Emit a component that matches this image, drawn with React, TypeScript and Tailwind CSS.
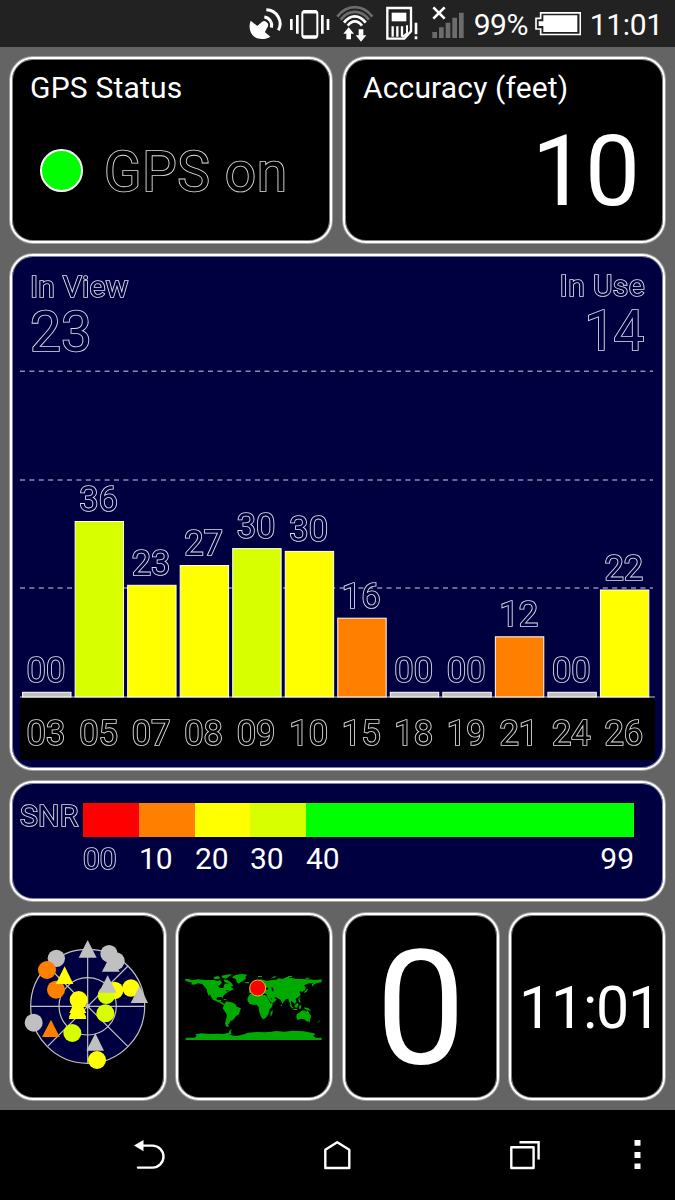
import React from 'react'

type Bar = {
  id: string
  snr: string
  top: number
  color: string
}

const GRAY = '#c0c0c0'
const ORANGE = '#ff8000'
const YELLOW = '#ffff00'
const LIME = '#d8ff00'

const bars: Bar[] = [
  { id: '03', snr: '00', top: 692.3, color: GRAY },
  { id: '05', snr: '36', top: 521.5, color: LIME },
  { id: '07', snr: '23', top: 585.3, color: YELLOW },
  { id: '08', snr: '27', top: 565.5, color: YELLOW },
  { id: '09', snr: '30', top: 548.6, color: LIME },
  { id: '10', snr: '30', top: 551.4, color: YELLOW },
  { id: '15', snr: '16', top: 618.2, color: ORANGE },
  { id: '18', snr: '00', top: 692.3, color: GRAY },
  { id: '19', snr: '00', top: 692.3, color: GRAY },
  { id: '21', snr: '12', top: 636.8, color: ORANGE },
  { id: '24', snr: '00', top: 692.3, color: GRAY },
  { id: '26', snr: '22', top: 590, color: YELLOW },
]

// the fill hides the inner half of the stroke, so only a hairline stays outside the glyph
const outlineBlack = 'will-change-transform text-black [-webkit-text-stroke:1.7px_#e0e0e0] [paint-order:stroke_fill]'
const outlineNavy = 'will-change-transform text-[#000040] [-webkit-text-stroke:1.7px_#e0e0e8] [paint-order:stroke_fill]'

const Panel = (props: { className?: string; children: React.ReactNode }) => {
  return (
    <div
      className={`overflow-hidden rounded-[23px] border-2 border-white shadow-[0_0_0_1px_rgba(255,255,255,0.4),inset_0_0_0_1px_rgba(255,255,255,0.5)] ${props.className ?? ''}`}
    >
      {props.children}
    </div>
  )
}

const StatusBar = () => {
  return (
    <header className="flex h-[47px] items-start bg-[#222222] pl-[246.67px]">
      {/* gps dish */}
      <svg className="h-[47px] w-[40px] shrink-0" viewBox="20 0 120 141">
        <path d="M31 62C24 80 28 101 43 111C58 120 77 118 90 110L76 98L64 90L50 77Z" fill="#fff" />
        <path d="M48 80L62 68A11 11 0 1 1 80 84L72 100Z" fill="#fff" />
        <path d="M72 51A25 25 0 0 1 93 83" fill="none" stroke="#fff" strokeWidth="9" />
        <path d="M78 29A42 42 0 0 1 114 91" fill="none" stroke="#fff" strokeWidth="9" />
      </svg>
      {/* vibrate */}
      <svg className="h-[47px] w-[46px] shrink-0" viewBox="140 0 138 141">
        <rect x="186" y="33" width="45" height="80" rx="8" fill="none" stroke="#fff" strokeWidth="6" />
        <path d="M188 36H230M188 110H230" stroke="#fff" strokeWidth="9" />
        <path d="M171 45V101M246 45V101" stroke="#fff" strokeWidth="8" />
        <path d="M153 57V90M263 57V90" stroke="#fff" strokeWidth="8" />
      </svg>
      {/* wifi */}
      <svg className="h-[47px] w-[44px] shrink-0" viewBox="278 0 132 141">
        <g fill="none" strokeWidth="8">
          <path d="M291 50C320 12 367 12 396 50" stroke="#6c6c6c" />
          <path d="M301 59C325 28 362 28 386 59" stroke="#6c6c6c" />
          <path d="M311 68C330 43 357 43 376 68" stroke="#fff" />
          <path d="M322 77C335 60 352 60 365 77" stroke="#fff" />
        </g>
        <path d="M325 82L341 101H332V118H318V101H309ZM362 125L346 106H355V88H369V106H378Z" fill="#fff" />
      </svg>
      {/* sim card */}
      <svg className="h-[47px] w-[50px] shrink-0" viewBox="410 0 150 141">
        <path d="M441 24H512V94L492 116H441Z" fill="none" stroke="#fff" strokeWidth="7" />
        <rect x="454" y="38" width="44" height="26" fill="#fff" />
        <path d="M457 79V110M471 79V110M485 79V110" stroke="#fff" strokeWidth="7" />
        <path d="M500 76V100L486 112" fill="none" stroke="#fff" strokeWidth="6" />
        <path d="M527 68V103M527 109V118" stroke="#fff" strokeWidth="8" />
      </svg>
      {/* no signal */}
      <svg className="h-[47px] w-[40px] shrink-0" viewBox="560 0 120 141">
        <path d="M579 22L613 56M613 22L579 56" stroke="#fff" strokeWidth="8" />
        <path d="M583 96V114M603 82V114M623 68V114M643 53V114M663 38V114" stroke="#6c6c6c" strokeWidth="14" />
      </svg>
      <span className="ml-[7px] mt-[10px] w-[61px] text-[30px] leading-[30px] tracking-[-0.4px] text-white">99%</span>
      <svg className="h-[47px] w-[46px] shrink-0" viewBox="240 0 138 141">
        <path d="M257 38.500H376V103.500H257V87H243V55H257Z" fill="none" stroke="#fff" strokeWidth="5" />
        <path d="M265 46H367V96H265V78H251V64H265Z" fill="#fff" />
      </svg>
      <span className="ml-[9px] mt-[10px] text-[30px] leading-[30px] tracking-[-0.3px] text-white">11:01</span>
    </header>
  )
}

const SnrChart = () => {
  return (
    <svg className="block h-[405px] w-[651px] will-change-transform" viewBox="12 360 651 405">
      <rect x="20" y="697" width="635" height="63" fill="#000" />
      {[371.3, 480, 588].map((y) => (
        <path key={y} d={`M20 ${y}H653`} stroke="#8c8ca8" strokeWidth="1.4" strokeDasharray="5 4.4" />
      ))}
      <path d="M20 697H655" stroke="#c8c8d0" strokeWidth="1.2" />
      {bars.map((bar, i) => (
        <g key={bar.id}>
          <rect
            x={22.6 + i * 52.53}
            y={bar.top}
            width="48.4"
            height={697 - bar.top}
            fill={bar.color}
            stroke="#fff"
            strokeWidth="1"
          />
          <g className="[paint-order:stroke_fill]" strokeWidth="1.7" fontSize="34.5" textAnchor="middle">
            <text x={46 + i * 52.53} y={bar.top - 10.5} fill="#000040" stroke="#e0e0e8">{bar.snr}</text>
            <text x={46 + i * 52.53} y="745.3" fill="#000" stroke="#e0e0e0">{bar.id}</text>
          </g>
        </g>
      ))}
    </svg>
  )
}

const SkyView = () => {
  return (
    <svg className="h-[150px] w-[155px] shrink-0" viewBox="0 0 465 450">
      <g fill="none" stroke="#c0c0c0" strokeWidth="3.6">
        <circle cx="233" cy="229" r="171" fill="#000040" />
        <circle cx="233" cy="229" r="86" />
        <path d="M62 229H404M233 58V400M112 108L354 350M354 108L112 350" />
      </g>
      <circle cx="233" cy="229" r="6" fill="#c0c0c0" />
      <g fill={GRAY}>
        <circle cx="139" cy="85" r="26" />
        <path d="M302 74L329 125H276Z" />
        <circle cx="318" cy="93" r="26" />
        <circle cx="297" cy="71" r="26" />
        <path d="M233 30L260 83H206Z" />
        <circle cx="71" cy="278" r="27" />
      </g>
      <g fill={ORANGE}>
        <circle cx="111" cy="120" r="27" />
        <circle cx="138" cy="179" r="27" />
        <path d="M123 269L149 321H96Z" />
      </g>
      <g fill={YELLOW}>
        <path d="M164 109L190 162H137Z" />
        <circle cx="314" cy="181" r="26" />
        <circle cx="363" cy="174" r="26" />
        <path d="M203 210L229 262H176ZM203 214L229 267H176ZM203 196L229 249H178Z" />
        <circle cx="206" cy="210" r="27" />
        <circle cx="261" cy="390" r="27" />
      </g>
      <g fill={LIME}>
        <circle cx="289" cy="196" r="26" />
        <circle cx="286" cy="250" r="27" />
        <circle cx="187" cy="309" r="27" />
      </g>
      <g fill={GRAY}>
        <path d="M293 136L320 188H266Z" />
        <path d="M389 167L414 219H362Z" />
        <path d="M256 310L282 362H229Z" />
      </g>
    </svg>
  )
}

const WorldMap = () => {
  return (
    <svg className="h-[90px] w-[156px] shrink-0" viewBox="0 0 468 270">
      <g fill="#00aa00">
        {/* americas */}
        <path d="M28 57H38L48 61L64 58L88 60H116L124 64L132 60L138 68L132 74L126 80L134 84L142 84L144 74L152 70L162 74L168 84L174 88L164 92L156 96L150 100L144 106L140 112L141 117L137 112L130 110L122 113L122 119L130 120L136 119L134 125L142 129L146 134L140 134L132 128L122 124L112 120L106 112L102 103L98 108L94 98L92 88L86 80L78 72L66 70L54 74L44 73L48 68L38 65L28 63Z" />
        <path d="M112 52L124 48L132 51L130 57L116 57ZM136 47L160 43L168 44L160 49L150 56L140 54ZM142 58L154 60L166 68L172 78L164 80L156 70L146 66ZM168 52L178 45L198 42L214 44L208 50L210 56L202 62L192 68L188 71L182 66L180 58Z" />
        <path d="M140 116L150 118L154 121L146 120ZM145 131L152 124L162 126L172 129L180 134L182 140L195 145L192 153L188 164L180 168L176 175L168 182L163 182L160 190L156 194L159 200H151L147 190L151 176L153 164L146 154L140 145L143 137Z" />
        {/* europe and asia */}
        <path d="M220 87L228 84L226 78L234 74L240 70L244 63L254 58L264 60L272 63L288 60L300 59L308 55L320 57L334 50L344 53L358 56L376 57L396 58L418 60L437 58V67L424 69L416 72L408 80L408 73L412 69L400 70L392 73L384 76L390 84L386 91L378 96L374 94L370 96L374 102L372 108L364 114L358 116L362 124L356 132L350 126L346 122L344 128L350 139L344 136L340 126L336 116L330 118L324 124L320 132L314 120L308 116L300 112L294 112L298 116L302 118L298 124L288 130L282 124L274 110L271 102L262 100L258 97L250 98L244 94L236 94L228 101L219 98Z" />
        {/* africa */}
        <path d="M222 103L236 99L246 100L250 105L260 104L270 106L276 114L280 124L284 130L291 130L288 140L280 150L277 163L269 174L260 178L254 168L250 156L248 142L242 134H230L220 131L214 121L216 111ZM284 156L291 150L288 166L283 168Z" />
        {/* oceania */}
        <path d="M362 163L372 156L379 151L388 152L390 157L394 150L400 160L406 168L402 179L394 185L384 178L376 176L364 180L361 172ZM398 181H402V186H398ZM434 179L431 184L423 190L426 185ZM340 132L354 144L350 146L342 138ZM356 136L364 128L368 134L362 144L356 142ZM370 136H376L374 146H369ZM352 147H364V150H352ZM366 114L372 120L374 128L368 126ZM384 142L396 144L406 153L396 151L386 147ZM384 96L392 88L396 86L394 94L386 99ZM370 112H373V117H370ZM314 134H318V138H314Z" />
        {/* antarctica */}
        <path d="M29 233H437V240H29ZM160 212L169 207L164 214L166 222H156Z" />
        <path d="M55 235L62 227L58 223L78 220L100 222L124 221L144 222L154 219L160 222L166 226L180 228L200 224L216 218L244 216L266 217L286 215L300 213L326 215L350 212L384 214L406 218L418 221L412 228L420 235Z" />
        <path d="M246 48H258V51H246ZM284 56L292 50L302 47L296 53ZM336 48H348V51H336ZM208 66H219V70H208ZM388 53H400V56H388Z" />
      </g>
      <path d="M264 86L274 82L278 86L270 90ZM286 82L292 84L292 94H288ZM150 91H158V94H150ZM284 112L289 118L286 119Z" fill="#000" />
      <circle cx="245" cy="84" r="24" fill="#ff0000" stroke="#e8c020" strokeWidth="3" />
    </svg>
  )
}

const NavBar = () => {
  return (
    <nav className="h-[90px] bg-black">
      <svg className="h-[90px] w-[675px]" viewBox="0 1110 675 90" fill="none" stroke="#fff" strokeWidth="2.4">
        <path d="M138 1167.600H152.500A11 11 0 0 0 152.500 1145.600H141" strokeLinecap="round" />
        <path d="M134 1145.600L143.500 1140V1151.200Z" fill="#fff" stroke="none" />
        <path d="M325.300 1168V1149.800L337.200 1142.200L349.300 1149.800V1168Z" strokeLinejoin="round" />
        <path d="M511.300 1147.200H533.600V1168H511.300Z" strokeLinejoin="round" />
        <path d="M519.500 1142.200H538.600V1159.600" />
        <path d="M634.500 1140h6v5.700h-6ZM634.500 1152h6v6h-6ZM634.500 1163.400h6v5.700h-6Z" fill="#fff" stroke="none" />
      </svg>
    </nav>
  )
}

export default function App() {
  return (
    <div className="flex h-[1200px] w-[675px] flex-col overflow-hidden bg-[#646464] font-[Roboto,sans-serif]">
      <StatusBar />
      <main className="flex flex-1 flex-col gap-[11px] px-[10px] pt-[10px]">
        <div className="flex gap-[11px] text-white">
          <Panel className="h-[186px] w-[322px] bg-black pl-[18px] pt-[14px]">
            <h1 className="text-[30px] leading-[30px] tracking-[0.2px]">GPS Status</h1>
            <div className="mt-[42px] flex items-start">
              <div className="ml-[10px] mt-[4px] h-[43px] w-[43px] rounded-full border-2 border-white bg-[#00ff00]" />
              <span className={`ml-[21px] whitespace-nowrap text-[55px] leading-[55px] tracking-[0.6px] ${outlineBlack}`}>
                GPS on
              </span>
            </div>
          </Panel>
          <Panel className="h-[186px] w-[322px] bg-black pl-[18px] pr-[25px] pt-[14px]">
            <h1 className="text-[30px] leading-[30px] tracking-[0.15px]">Accuracy (feet)</h1>
            <p className="mt-[20px] text-right text-[98px] leading-[98px] tracking-[-2px]">10</p>
          </Panel>
        </div>

        <Panel className="h-[516px] bg-[#000040]">
          <div className={`flex h-[104px] justify-between pl-[18px] pr-[18px] pt-[16px] ${outlineNavy}`}>
            <div>
              <p className="text-[30px] leading-[30px] tracking-[0.2px]">In View</p>
              <p className="mt-[3px] text-[55px] leading-[55px]">23</p>
            </div>
            <div className="-mt-[1px] text-right">
              <p className="text-[30px] leading-[30px] tracking-[0.4px]">In Use</p>
              <p className="mr-[2px] mt-[3px] text-[55px] leading-[55px] tracking-[-1.5px]">14</p>
            </div>
          </div>
          <SnrChart />
        </Panel>

        <Panel className="flex h-[120px] bg-[#000040] pt-[18px]">
          <span className={`w-[71px] shrink-0 pl-[8px] text-[30px] leading-[30px] tracking-[0.3px] ${outlineNavy}`}>
            SNR
          </span>
          <div className="w-[551px] pt-[2px]">
            <div className="flex h-[34px]">
              <div className="w-[56px] bg-[#ff0000]" />
              <div className="w-[56px] bg-[#ff8000]" />
              <div className="w-[55px] bg-[#ffff00]" />
              <div className="w-[56px] bg-[#d8ff00]" />
              <div className="flex-1 bg-[#00ff00]" />
            </div>
            <div className="mt-[7px] flex text-[30px] leading-[30px] text-white">
              <span className={`w-[56px] ${outlineNavy}`}>00</span>
              <span className="w-[56px]">10</span>
              <span className="w-[55px]">20</span>
              <span className="w-[56px]">30</span>
              <span>40</span>
              <span className="ml-auto">99</span>
            </div>
          </div>
        </Panel>

        <div className="mt-[1px] grid grid-cols-4 gap-[10.5px] text-white">
          <Panel className="flex h-[187px] items-center justify-center bg-black pb-[3px]">
            <SkyView />
          </Panel>
          <Panel className="flex h-[187px] items-center justify-center bg-black pb-[3px]">
            <WorldMap />
          </Panel>
          <Panel className="flex h-[187px] items-center justify-center bg-black pt-[4px]">
            <span className="text-[160px] leading-[160px]">0</span>
          </Panel>
          <Panel className="flex h-[187px] items-center justify-center bg-black pl-[5px] pt-[1px]">
            <span className="text-[59px] leading-[59px] tracking-[-1.2px]">11:01</span>
          </Panel>
        </div>
      </main>
      <NavBar />
    </div>
  )
}
